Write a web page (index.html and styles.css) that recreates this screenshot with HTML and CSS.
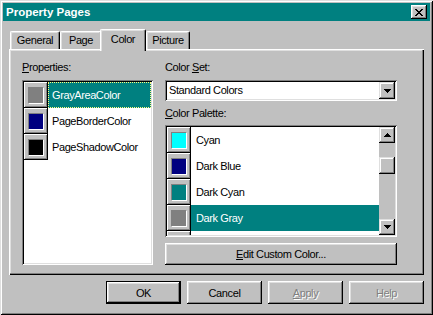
FILE: index.html
```html
<!DOCTYPE html>
<html lang="en">
<head>
    <meta charset="UTF-8">
    <title>Property Pages</title>
    <link rel="stylesheet" href="styles.css">
</head>
<body>
    <div class="window">
        <div class="titlebar">
            <span class="title">Property Pages</span>
            <button class="close">
                <svg width="8" height="7" viewBox="0 0 8 7"><path d="M0 0h2v1H0zM6 0h2v1H6zM1 1h2v1H1zM5 1h2v1H5zM2 2h4v1H2zM3 3h2v1H3zM2 4h4v1H2zM1 5h2v1H1zM5 5h2v1H5zM0 6h2v1H0zM6 6h2v1H6z" fill="#000"/></svg>
            </button>
        </div>

        <div class="tabs">
            <div class="tab tab-general">General</div>
            <div class="tab tab-page">Page</div>
            <div class="tab tab-color active">Color</div>
            <div class="tab tab-picture">Picture</div>
        </div>

        <div class="panel">
            <div class="col-left">
                <div class="label"><u>P</u>roperties:</div>
                <div class="list props">
                    <div class="row selected focused">
                        <span class="swatch"><span class="chip c-gray"></span></span>
                        <span class="name">GrayAreaColor</span>
                    </div>
                    <div class="row">
                        <span class="swatch"><span class="chip c-navy"></span></span>
                        <span class="name">PageBorderColor</span>
                    </div>
                    <div class="row">
                        <span class="swatch"><span class="chip c-black"></span></span>
                        <span class="name">PageShadowColor</span>
                    </div>
                </div>
            </div>

            <div class="col-right">
                <div class="label">Color <u>S</u>et:</div>
                <div class="combo">
                    <span class="combo-text">Standard Colors</span>
                    <span class="sb-btn drop">
                        <svg width="7" height="4" viewBox="0 0 7 4"><path d="M0 0h7v1H0zM1 1h5v1H1zM2 2h3v1H2zM3 3h1v1H3z" fill="#000"/></svg>
                    </span>
                </div>
                <div class="label label-palette"><u>C</u>olor Palette:</div>
                <div class="list palette">
                    <div class="rows">
                        <div class="row">
                            <span class="swatch"><span class="chip c-cyan"></span></span>
                            <span class="name">Cyan</span>
                        </div>
                        <div class="row">
                            <span class="swatch"><span class="chip c-navy"></span></span>
                            <span class="name">Dark Blue</span>
                        </div>
                        <div class="row">
                            <span class="swatch"><span class="chip c-teal"></span></span>
                            <span class="name">Dark Cyan</span>
                        </div>
                        <div class="row selected">
                            <span class="swatch"><span class="chip c-gray"></span></span>
                            <span class="name">Dark Gray</span>
                        </div>
                        <!-- next row is scrolled out, only the top of its swatch shows -->
                        <div class="row">
                            <span class="swatch"><span class="chip c-green"></span></span>
                            <span class="name"></span>
                        </div>
                    </div>
                    <div class="scrollbar">
                        <span class="sb-btn">
                            <svg width="7" height="4" viewBox="0 0 7 4"><path d="M3 0h1v1H3zM2 1h3v1H2zM1 2h5v1H1zM0 3h7v1H0z" fill="#000"/></svg>
                        </span>
                        <div class="track"><span class="thumb"></span></div>
                        <span class="sb-btn">
                            <svg width="7" height="4" viewBox="0 0 7 4"><path d="M0 0h7v1H0zM1 1h5v1H1zM2 2h3v1H2zM3 3h1v1H3z" fill="#000"/></svg>
                        </span>
                    </div>
                </div>
                <button class="btn wide"><u>E</u>dit Custom Color...</button>
            </div>
        </div>

        <div class="buttons">
            <button class="btn default">OK</button>
            <button class="btn">Cancel</button>
            <button class="btn disabled"><u>A</u>pply</button>
            <button class="btn disabled">Help</button>
        </div>
    </div>
</body>
</html>
```

FILE: styles.css
```css
* {
    box-sizing: border-box;
}
body {
    margin: 0;
    font-family: "Liberation Sans", Arial, sans-serif;
    font-size: 11px;
    letter-spacing: -0.4px;
    color: #000;
    background-color: #c0c0c0;
}
.window {
    width: 433px;
    height: 315px;
    padding: 3px;
    background-color: #c0c0c0;
    box-shadow: inset 1px 1px #dfdfdf, inset -1px -1px #000, inset 2px 2px #fff, inset -2px -2px #808080;
}
.titlebar {
    height: 18px;
    display: flex;
    align-items: center;
    justify-content: space-between;
    padding: 0 3px 0 3px;
    background-color: #008080;
    color: #fff;
    font-weight: bold;
    font-size: 11.5px;
    letter-spacing: 0;
}
.close {
    width: 16px;
    height: 14px;
    padding: 0;
    border: none;
    display: flex;
    align-items: center;
    justify-content: center;
    background-color: #c0c0c0;
    box-shadow: inset -1px -1px #000, inset 1px 1px #fff, inset -2px -2px #808080, inset 2px 2px #dfdfdf;
}

/* tabs */
.tabs {
    height: 28px;
    display: flex;
    align-items: flex-end;
    padding-left: 7px;
}
.tab {
    height: 18px;
    line-height: 17px;
    text-align: center;
    background-color: #c0c0c0;
    border: 1px solid;
    border-color: #fff #000 transparent #fff;
    border-bottom: none;
    border-radius: 2px 2px 0 0;
    box-shadow: inset -1px 0 #808080, inset 1px 1px #dfdfdf;
}
.tab-general { width: 50px; }
.tab-page { width: 42px; }
.tab-color { width: 46px; }
.tab-picture { width: 44px; }
.tab.active {
    position: relative;
    z-index: 1;
    height: 22px;
    line-height: 18px;
    margin-left: -2px;
    margin-bottom: -2px;
}

/* panel */
.panel {
    width: 415px;
    height: 226px;
    margin-left: 6px;
    display: flex;
    gap: 12px;
    padding: 12px 0 0 13px;
    box-shadow: inset 1px 1px #fff, inset -1px -1px #000, inset -2px -2px #808080, inset 2px 2px #dfdfdf;
}
.col-left {
    width: 131px;
}
.col-right {
    width: 232px;
}
.label {
    height: 19px;
    line-height: 13px;
}
.label-palette {
    height: 24px;
    padding-top: 6px;
}

.list {
    padding: 2px;
    background-color: #fff;
    overflow: hidden;
    box-shadow: inset 1px 1px #808080, inset -1px -1px #fff, inset 2px 2px #000, inset -2px -2px #dfdfdf;
}
.props {
    height: 185px;
}
.palette {
    height: 112px;
    display: flex;
}
.rows {
    flex: 1;
    overflow: hidden;
}
.row {
    display: flex;
    height: 26px;
}
.swatch {
    width: 24px;
    flex: none;
    padding: 5px 3px 3px 4px;
    border-right: 1px solid #000;
    border-bottom: 1px solid #000;
    background-color: #c0c0c0;
    box-shadow: inset 1px 1px #fff, inset -1px -1px #808080;
}
.chip {
    display: block;
    width: 100%;
    height: 100%;
    border: 1px solid;
    border-color: #808080 #fff #fff #808080;
}
.c-gray { background-color: #808080; }
.c-navy { background-color: #000080; }
.c-black { background-color: #000; }
.c-cyan { background-color: #00ffff; }
.c-teal { background-color: #008080; }
.c-green { background-color: #008000; }
.name {
    flex: 1;
    display: flex;
    align-items: center;
    padding-left: 4px;
    padding-bottom: 1px;
    white-space: nowrap;
}
.palette .name {
    padding-left: 5px;
}
.row.selected .name {
    background-color: #008080;
    color: #fff;
}
.row.focused .name {
    outline: 1px dotted #ffff80;
    outline-offset: -1px;
}

/* combo + scrollbar */
.combo {
    height: 21px;
    display: flex;
    padding: 2px;
    background-color: #fff;
    box-shadow: inset 1px 1px #808080, inset -1px -1px #fff, inset 2px 2px #000, inset -2px -2px #dfdfdf;
}
.combo-text {
    flex: 1;
    line-height: 16px;
    padding-left: 2px;
}
.sb-btn {
    width: 16px;
    height: 16px;
    flex: none;
    display: flex;
    align-items: center;
    justify-content: center;
    background-color: #c0c0c0;
    box-shadow: inset -1px -1px #000, inset 1px 1px #dfdfdf, inset -2px -2px #808080, inset 2px 2px #fff;
}
.sb-btn.drop {
    height: 17px;
}
.scrollbar {
    width: 16px;
    display: flex;
    flex-direction: column;
    background-color: #c0c0c0;
}
.track {
    flex: 1;
    padding-top: 14px;
}
.thumb {
    display: block;
    width: 16px;
    height: 17px;
    box-shadow: inset -1px -1px #000, inset 1px 1px #dfdfdf, inset -2px -2px #808080, inset 2px 2px #fff;
}

/* buttons */
.btn {
    width: 75px;
    height: 23px;
    padding: 0;
    border: none;
    font: inherit;
    letter-spacing: inherit;
    color: #000;
    background-color: #c0c0c0;
    box-shadow: inset -1px -1px #000, inset 1px 1px #fff, inset -2px -2px #808080, inset 2px 2px #dfdfdf;
}
.btn.wide {
    width: 100%;
    height: 22px;
    margin-top: 6px;
}
.btn.default {
    border: 1px solid #000;
}
.btn.disabled {
    color: #808080;
    text-shadow: 1px 1px #fff;
}
.buttons {
    display: flex;
    justify-content: flex-end;
    gap: 6px;
    margin-top: 6px;
    padding-right: 6px;
}
```
